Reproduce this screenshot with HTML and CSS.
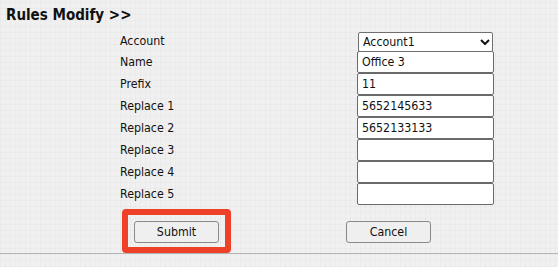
FILE: index.html
```html
<!DOCTYPE html>
<html>
<head>
<meta charset="utf-8">
<title>Rules Modify</title>
<link rel="stylesheet" href="styles.css">
</head>
<body>
<div class="page">
  <h1 class="title">Rules Modify &gt;&gt;</h1>
  <form class="rules">
    <div class="grid">
      <label class="lbl">Account</label>
      <div class="select-wrap">
        <select class="sel"><option>Account1</option></select>
        <svg class="chev" width="10" height="6" viewBox="0 0 10 6"><path d="M1 1 L5 5 L9 1" fill="none" stroke="#111" stroke-width="2"/></svg>
      </div>
      <label class="lbl">Name</label>
      <input class="txt" type="text" value="Office 3">
      <label class="lbl">Prefix</label>
      <input class="txt" type="text" value="11">
      <label class="lbl">Replace 1</label>
      <input class="txt" type="text" value="5652145633">
      <label class="lbl">Replace 2</label>
      <input class="txt" type="text" value="5652133133">
      <label class="lbl">Replace 3</label>
      <input class="txt" type="text" value="">
      <label class="lbl">Replace 4</label>
      <input class="txt" type="text" value="">
      <label class="lbl">Replace 5</label>
      <input class="txt" type="text" value="">
    </div>
    <div class="actions">
      <span class="highlight"><button type="button" class="btn">Submit</button></span>
      <button type="button" class="btn">Cancel</button>
    </div>
  </form>
  <div class="divider"></div>
</div>
</body>
</html>
```
FILE: styles.css
```css
html, body {
  margin: 0;
  padding: 0;
}
body {
  background-color: #f0f0f0;
  background-image:
    repeating-linear-gradient(90deg, rgba(0,0,0,0.018) 0 1px, transparent 1px 5px),
    repeating-linear-gradient(0deg, rgba(0,0,0,0.018) 0 1px, transparent 1px 6px);
  font-family: "DejaVu Sans Condensed", "DejaVu Sans", sans-serif;
  font-stretch: condensed;
  color: #111;
  width: 558px;
  height: 267px;
  overflow: hidden;
}
.page {
  display: flex;
  flex-direction: column;
}
.title {
  margin: 0;
  padding: 6px 0 0 6px;
  font-size: 15px;
  line-height: 18px;
  font-weight: bold;
  color: #111;
}
.rules {
  margin: 7px 0 0 120px;
  display: flex;
  flex-direction: column;
}
.grid {
  display: grid;
  grid-template-columns: 237px 137px;
  grid-template-rows: 20px repeat(7, 22px);
  align-items: center;
}
.lbl {
  font-size: 12.3px;
  line-height: 15px;
  color: #111;
}
.select-wrap {
  position: relative;
  width: 135px;
  height: 20px;
  margin-left: 1px;
}
.sel {
  appearance: none;
  -webkit-appearance: none;
  box-sizing: border-box;
  width: 135px;
  height: 20px;
  margin: 0;
  padding: 0 0 0 4px;
  border: 1px solid #6f6f6f;
  border-radius: 2px;
  background: #fff;
  font-family: inherit;
  font-stretch: condensed;
  font-size: 12.3px;
  color: #111;
}
.chev {
  position: absolute;
  right: 3px;
  top: 8px;
}
.txt {
  box-sizing: border-box;
  width: 137px;
  height: 22px;
  margin: 0;
  padding: 0 4px;
  border: 1px solid #6a6a6a;
  border-radius: 2px;
  background: #fff;
  font-family: inherit;
  font-stretch: condensed;
  font-size: 12.3px;
  color: #111;
  outline: none;
}
.actions {
  margin-top: 16px;
  padding-left: 14px;
  display: flex;
  gap: 127px;
}
.highlight {
  position: relative;
  display: inline-flex;
}
.highlight::after {
  content: "";
  position: absolute;
  top: -12px;
  left: -12px;
  right: -12px;
  bottom: -10px;
  border: 6px solid #ee4127;
  border-radius: 4px;
  pointer-events: none;
}
.btn {
  box-sizing: border-box;
  width: 85px;
  height: 22px;
  margin: 0;
  padding: 0;
  border: 1px solid #8a8a8a;
  border-radius: 3px;
  background: #efefef;
  font-family: inherit;
  font-stretch: condensed;
  font-size: 12.3px;
  color: #111;
}
.divider {
  margin-top: 10px;
  height: 1px;
  background: #b5b5b5;
}
```
